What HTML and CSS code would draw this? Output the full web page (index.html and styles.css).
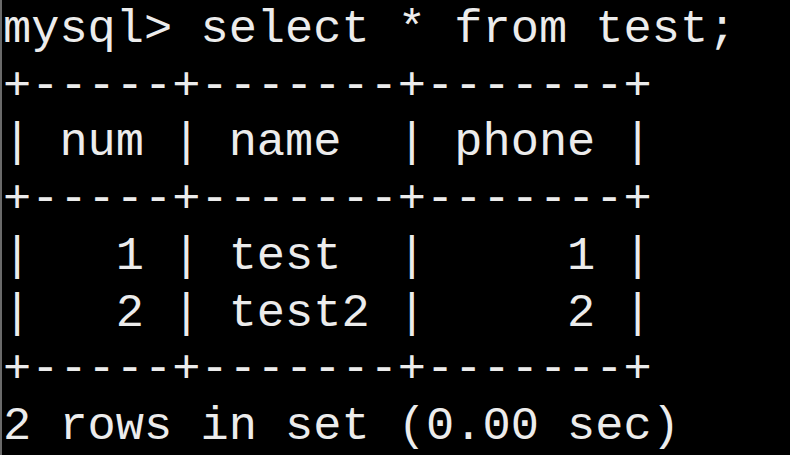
FILE: index.html
```html
<!DOCTYPE html>
<html>
<head>
<meta charset="utf-8">
<link rel="stylesheet" href="styles.css">
</head>
<body>
<pre class="term">mysql&gt; select * from test;
+-----+-------+-------+
| num | name  | phone |
+-----+-------+-------+
|   1 | test  |     1 |
|   2 | test2 |     2 |
+-----+-------+-------+
2 rows in set (0.00 sec)</pre>
</body>
</html>
```
FILE: styles.css
```css
html, body {
  margin: 0;
  padding: 0;
  background: #000;
  width: 790px;
  height: 455px;
  overflow: hidden;
}
.term {
  margin: 0;
  height: 455px;
  box-sizing: border-box;
  padding: 2px 0 0 1px;
  border-left: 2px solid #6a6a6a;
  font-family: "Liberation Mono", "DejaVu Sans Mono", monospace;
  font-size: 47px;
  line-height: 56.7px;
  color: #ececec;
  white-space: pre;
}
```
